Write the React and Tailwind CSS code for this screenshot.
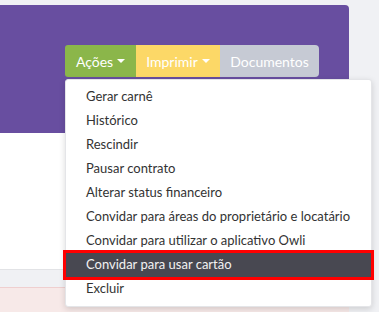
import React from 'react';

const items = [
  'Gerar carnê',
  'Histórico',
  'Rescindir',
  'Pausar contrato',
  'Alterar status financeiro',
  'Convidar para áreas do proprietário e locatário',
  'Convidar para utilizar o aplicativo Owli',
  'Convidar para usar cartão',
  'Excluir',
];

function Caret() {
  return <span className="ml-[4px] inline-block h-0 w-0 border-x-[4px] border-t-[4px] border-x-transparent border-t-white align-middle" />;
}

export default function App() {
  return (
    <div className="relative h-[312px] w-[379px] overflow-hidden bg-[#f0f1f4] pt-[5px] font-['Lato','Liberation_Sans',sans-serif]">
      <div className="w-[349px]">
        <div className="h-[128px] rounded-tr-[4px] bg-[#684ea0] pl-[65px] pt-[40px]">
          <div className="flex h-[32px] text-[14px] text-white">
            <div className="flex w-[71px] items-center justify-center rounded-l-[3px] bg-[#8bb64a]">
              Ações<Caret />
            </div>
            <div className="flex w-[84px] items-center justify-center bg-[#fcd867]">
              Imprimir<Caret />
            </div>
            <div className="flex w-[99px] items-center justify-center rounded-r-[4px] bg-[#c6cad4]">
              Documentos
            </div>
          </div>
        </div>
        <div className="h-[137px] border-b border-[#e2e3e6] bg-white" />
        <div className="h-[17px]" />
        <div className="h-[40px] border-t border-[#efcfcf] bg-[#f7e9e8]" />
      </div>

      <div className="absolute left-[65px] top-[79px] w-[307px] rounded-[3px] border border-[#e4e5e8] bg-white py-[5px] shadow-[0_2px_6px_rgba(0,0,0,0.15)]">
        {items.map((label, i) =>
          i === 7 ? (
            <div
              key={label}
              className="flex h-[24px] items-center bg-[#484851] pl-[20px] text-[13px] text-[#f2f2f2] outline-[3px] outline-[#ff0000]"
              style={{ outlineStyle: 'solid' }}
            >
              {label}
            </div>
          ) : (
            <div key={label} className="flex h-[24px] items-center pl-[20px] text-[13px] text-[#333]">
              {label}
            </div>
          )
        )}
      </div>
    </div>
  );
}
